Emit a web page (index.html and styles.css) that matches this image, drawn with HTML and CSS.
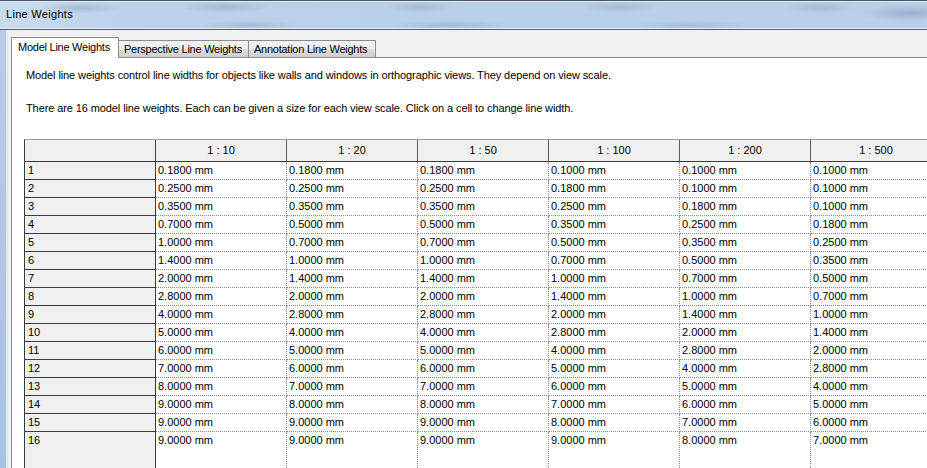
FILE: index.html
```html
<!DOCTYPE html>
<html>
<head>
<meta charset="utf-8">
<title>Line Weights</title>
<link rel="stylesheet" href="styles.css">
</head>
<body>
<div class="window">
  <div class="titlebar"><span class="title">Line Weights</span></div>
  <div class="frame">
    <div class="frame-left"></div>
    <div class="client">
      <div class="tabs">
        <div class="tab active">Model Line Weights</div>
        <div class="tab">Perspective Line Weights</div>
        <div class="tab last">Annotation Line Weights</div>
      </div>
      <div class="panel">
        <p class="info first">Model line weights control line widths for objects like walls and windows in orthographic views. They depend on view scale.</p>
        <p class="info second">There are 16 model line weights. Each can be given a size for each view scale. Click on a cell to change line width.</p>
        <table class="grid">
          <colgroup><col><col><col><col><col><col><col></colgroup>
          <thead>
            <tr><th class="corner"></th><th>1 : 10</th><th>1 : 20</th><th>1 : 50</th><th>1 : 100</th><th>1 : 200</th><th>1 : 500</th></tr>
          </thead>
          <tbody>
            <tr><th>1</th><td>0.1800 mm</td><td>0.1800 mm</td><td>0.1800 mm</td><td>0.1000 mm</td><td>0.1000 mm</td><td>0.1000 mm</td></tr>
            <tr><th>2</th><td>0.2500 mm</td><td>0.2500 mm</td><td>0.2500 mm</td><td>0.1800 mm</td><td>0.1000 mm</td><td>0.1000 mm</td></tr>
            <tr><th>3</th><td>0.3500 mm</td><td>0.3500 mm</td><td>0.3500 mm</td><td>0.2500 mm</td><td>0.1800 mm</td><td>0.1000 mm</td></tr>
            <tr><th>4</th><td>0.7000 mm</td><td>0.5000 mm</td><td>0.5000 mm</td><td>0.3500 mm</td><td>0.2500 mm</td><td>0.1800 mm</td></tr>
            <tr><th>5</th><td>1.0000 mm</td><td>0.7000 mm</td><td>0.7000 mm</td><td>0.5000 mm</td><td>0.3500 mm</td><td>0.2500 mm</td></tr>
            <tr><th>6</th><td>1.4000 mm</td><td>1.0000 mm</td><td>1.0000 mm</td><td>0.7000 mm</td><td>0.5000 mm</td><td>0.3500 mm</td></tr>
            <tr><th>7</th><td>2.0000 mm</td><td>1.4000 mm</td><td>1.4000 mm</td><td>1.0000 mm</td><td>0.7000 mm</td><td>0.5000 mm</td></tr>
            <tr><th>8</th><td>2.8000 mm</td><td>2.0000 mm</td><td>2.0000 mm</td><td>1.4000 mm</td><td>1.0000 mm</td><td>0.7000 mm</td></tr>
            <tr><th>9</th><td>4.0000 mm</td><td>2.8000 mm</td><td>2.8000 mm</td><td>2.0000 mm</td><td>1.4000 mm</td><td>1.0000 mm</td></tr>
            <tr><th>10</th><td>5.0000 mm</td><td>4.0000 mm</td><td>4.0000 mm</td><td>2.8000 mm</td><td>2.0000 mm</td><td>1.4000 mm</td></tr>
            <tr><th>11</th><td>6.0000 mm</td><td>5.0000 mm</td><td>5.0000 mm</td><td>4.0000 mm</td><td>2.8000 mm</td><td>2.0000 mm</td></tr>
            <tr><th>12</th><td>7.0000 mm</td><td>6.0000 mm</td><td>6.0000 mm</td><td>5.0000 mm</td><td>4.0000 mm</td><td>2.8000 mm</td></tr>
            <tr><th>13</th><td>8.0000 mm</td><td>7.0000 mm</td><td>7.0000 mm</td><td>6.0000 mm</td><td>5.0000 mm</td><td>4.0000 mm</td></tr>
            <tr><th>14</th><td>9.0000 mm</td><td>8.0000 mm</td><td>8.0000 mm</td><td>7.0000 mm</td><td>6.0000 mm</td><td>5.0000 mm</td></tr>
            <tr><th>15</th><td>9.0000 mm</td><td>9.0000 mm</td><td>9.0000 mm</td><td>8.0000 mm</td><td>7.0000 mm</td><td>6.0000 mm</td></tr>
            <tr class="lastrow"><th>16</th><td>9.0000 mm</td><td>9.0000 mm</td><td>9.0000 mm</td><td>9.0000 mm</td><td>8.0000 mm</td><td>7.0000 mm</td></tr>
          </tbody>
        </table>
      </div>
    </div>
  </div>
</div>
</body>
</html>
```

FILE: styles.css
```css
html, body {
  margin: 0;
  padding: 0;
  width: 927px;
  height: 468px;
  overflow: hidden;
  background: #f0f0f0;
  font-family: "Liberation Sans", Arial, sans-serif;
  font-size: 11px;
  color: #000;
}

.window {
  width: 927px;
  height: 468px;
  display: flex;
  flex-direction: column;
  overflow: hidden;
}

.titlebar {
  flex: none;
  height: 28px;
  border-top: 1px solid #4b5868;
  border-bottom: 1px solid #59636f;
  box-shadow: inset 0 1px 0 #dfe9f5, inset 0 -1px 0 #e4edf7;
  background:
    radial-gradient(ellipse 40px 6px at 80px 7px, rgba(120,140,165,0.35), transparent),
    radial-gradient(ellipse 45px 6px at 225px 6px, rgba(120,140,165,0.35), transparent),
    radial-gradient(ellipse 35px 6px at 420px 6px, rgba(120,140,165,0.3), transparent),
    radial-gradient(ellipse 40px 6px at 620px 6px, rgba(120,140,165,0.3), transparent),
    radial-gradient(ellipse 35px 6px at 820px 7px, rgba(120,140,165,0.3), transparent),
    radial-gradient(ellipse 50px 9px at 910px 12px, rgba(110,130,160,0.4), transparent),
    radial-gradient(ellipse 50px 5px at 250px 24px, rgba(120,140,165,0.3), transparent),
    radial-gradient(ellipse 60px 5px at 450px 24px, rgba(120,140,165,0.3), transparent),
    radial-gradient(ellipse 60px 5px at 690px 24px, rgba(120,140,165,0.25), transparent),
    linear-gradient(to right, #cadcef 0px, #bcd2eb 120px, #b8cfe9 500px, #bad0ea 927px);
  display: flex;
  align-items: flex-start;
}

.title {
  padding: 7px 0 0 6px;
  line-height: 13px;
  letter-spacing: 0.3px;
  color: #000;
}

.frame {
  flex: 1;
  display: flex;
  min-height: 0;
}

.frame-left {
  flex: none;
  width: 6px;
  border-right: 2px solid #dfe8f2;
  background: linear-gradient(to bottom, #b6cce6, #a9c2e0);
}

.client {
  flex: 1;
  min-width: 0;
  padding-left: 3px;
  display: flex;
  flex-direction: column;
  background: #f0f0f0;
}

.tabs {
  flex: none;
  height: 27px;
  display: flex;
  align-items: flex-end;
}

.tab {
  height: 16px;
  line-height: 16px;
  padding: 0 5px 0 5px;
  border-top: 1px solid #898c95;
  border-right: 1px solid #898c95;
  background: linear-gradient(to bottom, #f3f3f3 0%, #ebebeb 50%, #dddddd 51%, #cfcfcf 100%);
  letter-spacing: -0.25px;
  white-space: nowrap;
}

.tab.active {
  height: 18px;
  line-height: 18px;
  padding: 0 6px 2px 6px;
  width: 94px;
  border-left: 1px solid #898c95;
  background: #fff;
  margin-bottom: -1px;
  position: relative;
  z-index: 1;
}

.tab:nth-child(2) {
  width: 119px;
}

.tab.last {
  width: 116px;
}

.panel {
  flex: 1;
  min-height: 0;
  background: #fff;
  border-top: 1px solid #898c95;
  border-left: 1px solid #898c95;
  padding: 11px 0 0 12px;
  overflow: hidden;
}

.info {
  margin: 0;
  padding-left: 2px;
  line-height: 13px;
  letter-spacing: -0.1px;
  white-space: nowrap;
}

.info.second {
  margin-top: 20px;
}

.grid {
  margin-top: 24px;
  table-layout: fixed;
  width: 918px;
  border-collapse: separate;
  border-spacing: 0;
  border-top: 1px solid #a0a0a0;
  border-left: 1px solid #3c3c3c;
}

.grid col {
  width: 131px;
}

.grid th,
.grid td {
  padding: 0;
  font-weight: normal;
  white-space: nowrap;
  overflow: hidden;
}

.grid thead th {
  height: 20px;
  line-height: 20px;
  padding-bottom: 1px;
  text-align: center;
  background: #f0f0f0;
  border-right: 1px solid #5a5a5a;
  border-bottom: 1px solid #3c3c3c;
}

.grid thead th.corner {
  border-right-color: #3c3c3c;
}

.grid tbody th {
  height: 17px;
  line-height: 17px;
  text-align: left;
  padding-left: 3px;
  background: #f0f0f0;
  border-right: 1px solid #3c3c3c;
  border-bottom: 1px solid #3c3c3c;
}

.grid tbody td {
  height: 17px;
  line-height: 17px;
  padding-left: 2px;
  background: #fff;
  border-right: 1px dotted #8a8a8a;
  border-bottom: 1px dotted #8a8a8a;
}

.grid tbody tr.lastrow th,
.grid tbody tr.lastrow td {
  height: 60px;
  vertical-align: top;
  border-bottom: none;
}
```
